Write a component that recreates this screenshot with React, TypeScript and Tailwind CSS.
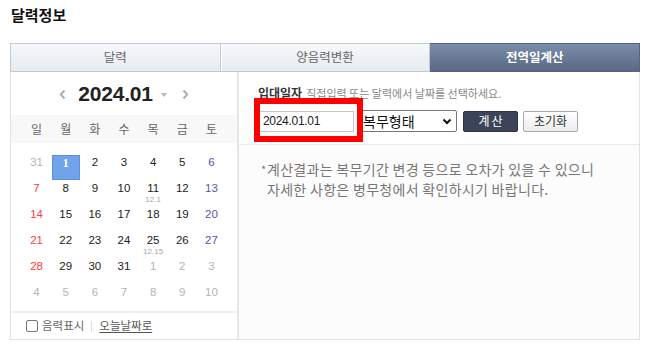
import React from "react";

const FONT = { fontFamily: '"Liberation Sans", "Noto Sans CJK KR", sans-serif' };
const KFONT = { fontFamily: '"Noto Sans CJK KR", "Liberation Sans", sans-serif' };

type Cell = { d: number; kind: "prev" | "cur" | "next"; lunar?: string; sel?: boolean };

const weeks: Cell[][] = [
  [{ d: 31, kind: "prev" }, { d: 1, kind: "cur", sel: true }, { d: 2, kind: "cur" }, { d: 3, kind: "cur" }, { d: 4, kind: "cur" }, { d: 5, kind: "cur" }, { d: 6, kind: "cur" }],
  [{ d: 7, kind: "cur" }, { d: 8, kind: "cur" }, { d: 9, kind: "cur" }, { d: 10, kind: "cur" }, { d: 11, kind: "cur", lunar: "12.1" }, { d: 12, kind: "cur" }, { d: 13, kind: "cur" }],
  [{ d: 14, kind: "cur" }, { d: 15, kind: "cur" }, { d: 16, kind: "cur" }, { d: 17, kind: "cur" }, { d: 18, kind: "cur" }, { d: 19, kind: "cur" }, { d: 20, kind: "cur" }],
  [{ d: 21, kind: "cur" }, { d: 22, kind: "cur" }, { d: 23, kind: "cur" }, { d: 24, kind: "cur" }, { d: 25, kind: "cur", lunar: "12.15" }, { d: 26, kind: "cur" }, { d: 27, kind: "cur" }],
  [{ d: 28, kind: "cur" }, { d: 29, kind: "cur" }, { d: 30, kind: "cur" }, { d: 31, kind: "cur" }, { d: 1, kind: "next" }, { d: 2, kind: "next" }, { d: 3, kind: "next" }],
  [{ d: 4, kind: "next" }, { d: 5, kind: "next" }, { d: 6, kind: "next" }, { d: 7, kind: "next" }, { d: 8, kind: "next" }, { d: 9, kind: "next" }, { d: 10, kind: "next" }],
];

function dayColor(c: Cell, col: number) {
  if (c.kind !== "cur") return "text-[#b4b4b4]";
  if (col === 0) return "text-[#ff3b3b]";
  if (col === 6) return "text-[#5b52b0]";
  return "text-[#222]";
}

function Chevron({ dir }: { dir: "l" | "r" }) {
  return (
    <svg width="7" height="11" viewBox="0 0 7 11">
      <polyline
        points={dir === "l" ? "5.5,1.5 1.8,5.5 5.5,9.5" : "1.5,1.5 5.2,5.5 1.5,9.5"}
        fill="none"
        stroke="#b0b0b0"
        strokeWidth="2"
      />
    </svg>
  );
}

export default function App() {
  const weekdays = ["일", "월", "화", "수", "목", "금", "토"];
  return (
    <div className="w-[655px] h-[355px] bg-white pl-[10px] pt-[5px] overflow-hidden" style={FONT}>
      <h2 className="text-[15px] font-bold leading-[20px] h-[20px] text-[#111] pl-[1px]" style={KFONT}>
        달력정보
      </h2>
      <div className="mt-[18px] w-[630px]">
        {/* Tabs */}
        <div className="flex h-[29px]" style={KFONT}>
          <div className="flex-1 flex items-center justify-center border border-[#c4cad2] bg-gradient-to-b from-[#f6f8fa] to-[#e7ebf0] text-[12.5px] text-[#666]">
            달력
          </div>
          <div className="flex-1 flex items-center justify-center border-y border-r border-[#c4cad2] bg-gradient-to-b from-[#f6f8fa] to-[#e7ebf0] text-[12.5px] text-[#666] shadow-[inset_1px_0_0_#fff]">
            양음력변환
          </div>
          <div className="flex-1 flex items-center justify-center border-y border-r border-[#56657e] bg-gradient-to-b from-[#7a8dab] to-[#5a6983] text-[12.5px] font-bold text-white">
            전역일계산
          </div>
        </div>
        {/* Body */}
        <div className="flex h-[268px] border-x border-b border-[#e2e2e2]">
          {/* Left calendar */}
          <div className="w-[228px] shrink-0 border-r-2 border-[#e6e6e6] flex flex-col">
            <div className="h-[43px] flex items-center justify-center">
              <span className="mr-[12px] mt-[1px]"><Chevron dir="l" /></span>
              <span className="text-[21px] font-bold text-[#222] leading-none tracking-[-0.2px]">2024.01</span>
              <span className="ml-[8px] mt-[2px] w-0 h-0 border-l-[3px] border-r-[3px] border-t-[4px] border-l-transparent border-r-transparent border-t-[#b8b8b8]" />
              <span className="ml-[15px] mt-[1px]"><Chevron dir="r" /></span>
            </div>
            <div className="h-[28px] bg-[#f8f8f8] grid grid-cols-7 px-[11px] items-center" style={KFONT}>
              {weekdays.map((w) => (
                <div key={w} className="text-center text-[12px] text-[#666] leading-none">
                  {w}
                </div>
              ))}
            </div>
            <div className="pt-[12px] px-[11px] h-[168px]">
              {weeks.map((wk, wi) => (
                <div key={wi} className="grid grid-cols-7 h-[26px]">
                  {wk.map((c, ci) => (
                    <div key={ci} className="flex justify-center">
                      {c.sel ? (
                        <div className="w-[28px] h-[25px] bg-[#71a3ea] border border-[#5d90dc] flex justify-center">
                          <span className="text-[12px] font-bold text-white leading-[14px]" style={{ fontFamily: '"Liberation Serif", serif' }}>
                            {c.d}
                          </span>
                        </div>
                      ) : (
                        <div className="flex flex-col items-center">
                          <span className={`text-[11.5px] leading-[14px] ${dayColor(c, ci)}`}>{c.d}</span>
                          {c.lunar && (
                            <span className="text-[8px] leading-[9px] text-[#a8a8a8]">{c.lunar}</span>
                          )}
                        </div>
                      )}
                    </div>
                  ))}
                </div>
              ))}
            </div>
            <div className="flex-1 border-t-2 border-[#f0f0f0] flex items-center pl-[15px]" style={KFONT}>
              <span className="w-[12px] h-[12px] border border-[#777] rounded-[2px] bg-white" />
              <span className="ml-[4px] text-[11.5px] text-[#666] leading-none">음력표시</span>
              <span className="mx-[7px] w-px h-[11px] bg-[#dcdcdc]" />
              <span className="text-[11.5px] text-[#555] leading-none underline underline-offset-2">오늘날짜로</span>
            </div>
          </div>
          {/* Right panel */}
          <div className="flex-1 relative flex flex-col bg-[#fcfcfc]">
            <div className="h-[73px] bg-white border-b border-[#ebebeb] pl-[19px] pt-[15px]">
              <div className="flex items-baseline h-[18px]" style={KFONT}>
                <span className="text-[12px] font-bold text-[#333] leading-none">입대일자</span>
                <span className="ml-[4px] text-[11px] text-[#888] leading-none">직접입력 또는 달력에서 날짜를 선택하세요.</span>
              </div>
              <div className="flex items-center mt-[5px] h-[22px]">
                <div className="ml-[1px] w-[95px] h-[21px] border border-[#c6c6c6] bg-white flex items-center pl-[3px]">
                  <span className="text-[12px] text-[#222] tracking-[-0.3px] leading-none">2024.01.01</span>
                </div>
                <div className="ml-[4px] w-[99px] h-[22px] border border-[#767676] rounded-[2px] bg-white flex items-center pl-[4px] pr-[4px]" style={KFONT}>
                  <span className="text-[14px] text-[#111] leading-none flex-1">복무형태</span>
                  <svg width="10" height="7" viewBox="0 0 10 7">
                    <polyline points="1.5,1.5 5,5 8.5,1.5" fill="none" stroke="#111" strokeWidth="2" />
                  </svg>
                </div>
                <div className="ml-[6px] w-[55px] h-[21px] rounded-[2px] bg-[#3b4458] border border-[#2c3343] flex items-center justify-center" style={KFONT}>
                  <span className="text-[12px] text-white tracking-[2px] leading-none pl-[2px]">계산</span>
                </div>
                <div className="ml-[5px] w-[55px] h-[21px] rounded-[2px] bg-gradient-to-b from-white to-[#ededed] border border-[#a9a9a9] flex items-center justify-center" style={KFONT}>
                  <span className="text-[12px] text-[#333] leading-none">초기화</span>
                </div>
              </div>
            </div>
            <div className="pt-[14px] pl-[22px] flex text-[14px] leading-[20px] text-[#777] tracking-[0.3px]" style={KFONT}>
              <span className="w-[6px] text-[11px]">*</span>
              <div>
                계산결과는 복무기간 변경 등으로 오차가 있을 수 있으니
                <br />
                자세한 사항은 병무청에서 확인하시기 바랍니다.
              </div>
            </div>
            <div className="absolute left-[15px] top-[26px] w-[109px] h-[44px] border-[6px] border-[#ff0000]" />
          </div>
        </div>
      </div>
    </div>
  );
}
